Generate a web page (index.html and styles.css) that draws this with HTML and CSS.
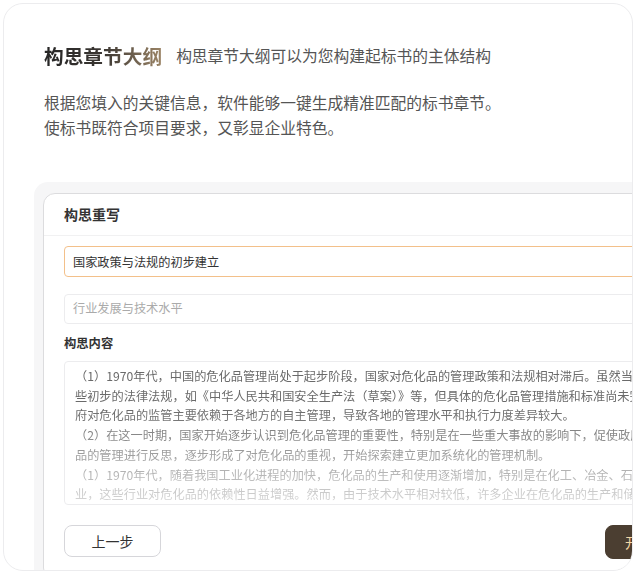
FILE: index.html
```html
<!DOCTYPE html>
<html>
	<head>
		<meta charset="UTF-8">
		<title>构思章节大纲</title>
		<link rel="stylesheet" href="styles.css">
	</head>
	<body>
		<div class="card">
			<div class="intro">
				<div class="introHead">
					<h2 class="introTitle">构思章节大纲</h2>
					<span class="introSub">构思章节大纲可以为您构建起标书的主体结构</span>
				</div>
				<p class="introText">
					根据您填入的关键信息，软件能够一键生成精准匹配的标书章节。<br>
					使标书既符合项目要求，又彰显企业特色。
				</p>
			</div>
			<div class="preview">
				<div class="dialog">
					<div class="dialogHead">构思重写</div>
					<div class="dialogBody">
						<input class="field active" type="text" value="国家政策与法规的初步建立">
						<input class="field second" type="text" placeholder="行业发展与技术水平">
						<div class="label">构思内容</div>
						<div class="content">
							<div class="contentText">
								<p>（1）1970年代，中国的危化品管理尚处于起步阶段，国家对危化品的管理政策和法规相对滞后。虽然当时已有一<br>些初步的法律法规，如《中华人民共和国安全生产法（草案）》等，但具体的危化品管理措施和标准尚未完善，政<br>府对危化品的监管主要依赖于各地方的自主管理，导致各地的管理水平和执行力度差异较大。</p>
								<p>（2）在这一时期，国家开始逐步认识到危化品管理的重要性，特别是在一些重大事故的影响下，促使政府对危化<br>品的管理进行反思，逐步形成了对危化品的重视，开始探索建立更加系统化的管理机制。</p>
								<p>（1）1970年代，随着我国工业化进程的加快，危化品的生产和使用逐渐增加，特别是在化工、冶金、石油等行<br>业，这些行业对危化品的依赖性日益增强。然而，由于技术水平相对较低，许多企业在危化品的生产和储存中</p>
							</div>
						</div>
						<div class="dialogFoot">
							<button class="btn">上一步</button>
							<button class="btn primary">开始构思</button>
						</div>
					</div>
				</div>
			</div>
		</div>
	</body>
</html>
```

FILE: styles.css
```css
* {
	box-sizing: border-box;
}
body {
	margin: 3px;
	background-color: #fff;
	font-family: "Liberation Sans", "Noto Sans CJK SC", sans-serif;
}
p, h2 {
	margin: 0;
}
.card {
	width: 630px;
	height: 568px;
	border: 1.5px solid #ececee;
	border-radius: 20px;
	background-color: #fff;
	overflow: hidden;
}
.intro {
	padding: 39px 40px 0;
}
.introHead {
	display: flex;
	align-items: center;
	gap: 14px;
	height: 28px;
}
.introTitle {
	font-size: 19.7px;
	font-weight: bold;
	line-height: 28px;
	background: linear-gradient(90deg, #262626 0%, #3a3632 50%, #9b8466 100%);
	-webkit-background-clip: text;
	background-clip: text;
	color: transparent;
}
.introSub {
	font-size: 15.75px;
	color: #555;
	line-height: 28px;
}
.introText {
	margin-top: 20px;
	font-size: 15.75px;
	line-height: 25px;
	color: #555;
}
.preview {
	margin: 41px 0 0 30px;
	width: 720px;
	padding: 11px 0 0 9px;
	background-color: #f6f6f7;
	border-radius: 14px 0 0 0;
}
.dialog {
	width: 680px;
	background-color: #fff;
	border: 1px solid #dcdcde;
	border-radius: 12px;
	padding-bottom: 20px;
}
.dialogHead {
	height: 42px;
	line-height: 42px;
	padding-left: 20px;
	font-size: 14px;
	font-weight: bold;
	color: #333;
	border-bottom: 1px solid #f1f1f2;
}
.dialogBody {
	padding: 10px 20px 0;
}
.field {
	display: block;
	width: 100%;
	height: 31px;
	padding: 0 8px;
	border: 1px solid #ececee;
	border-radius: 4px;
	font: 12.2px "Liberation Sans", "Noto Sans CJK SC", sans-serif;
	color: #333;
	outline: none;
}
.field::placeholder {
	color: #aaa;
}
.field.active {
	border-color: #f3c08a;
}
.field.second {
	margin-top: 17px;
	height: 30px;
}
.label {
	margin-top: 11px;
	font-size: 12.3px;
	font-weight: bold;
	line-height: 18px;
	color: #333;
}
.content {
	margin-top: 8px;
	height: 144px;
	border: 1px solid #ececee;
	border-radius: 4px;
	padding: 5px 10px 0;
	overflow: hidden;
}
.contentText {
	font-family: "Noto Sans CJK SC", sans-serif;
	font-size: 12.2px;
	line-height: 19.7px;
	color: #6a6a6a;
	white-space: nowrap;
	-webkit-mask-image: linear-gradient(#000 30%, rgba(0, 0, 0, 0.25) 100%);
	mask-image: linear-gradient(#000 30%, rgba(0, 0, 0, 0.25) 100%);
}
.dialogFoot {
	display: flex;
	justify-content: space-between;
	margin-top: 20px;
}
.btn {
	width: 97px;
	height: 32px;
	border: 1px solid #d6d6da;
	border-radius: 8px;
	background-color: #fff;
	font: 14px "Liberation Sans", "Noto Sans CJK SC", sans-serif;
	color: #333;
}
.btn.primary {
	border-color: #4b3e31;
	background-color: #4b3e31;
	color: #f3d6a4;
	height: 34px;
	text-align: left;
	padding-left: 19px;
}
```
